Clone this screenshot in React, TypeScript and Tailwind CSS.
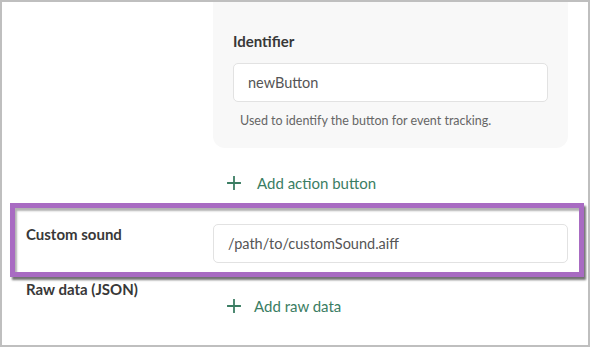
function PlusIcon() {
  return (
    <svg width="14" height="14" viewBox="0 0 14 14" fill="none" className="shrink-0">
      <path d="M7 0.5V13.5M0.5 7H13.5" stroke="#3b7d63" strokeWidth="1.8" strokeLinecap="round" />
    </svg>
  );
}

function AddLink({ label, gap }: { label: string; gap: string }) {
  return (
    <button className={`flex h-5 items-center ${gap} text-[15px] leading-5 text-[#3b7d63]`}>
      <PlusIcon />
      <span>{label}</span>
    </button>
  );
}

export default function App() {
  return (
    <div className="font-['Lato',sans-serif]">
      <div className="h-[347px] w-[590px] overflow-hidden border-2 border-[#bfbfbf] bg-white">
        {/* action button card */}
        <div className="pl-[211px]">
          <div className="w-[355px] rounded-b-[12px] bg-[#f8f8f8] px-5 pt-[29px] pb-[19px]">
            <div className="text-[15px] font-bold leading-5 text-[#383838]">Identifier</div>
            <div className="mt-3 flex h-[39px] items-center rounded-[5px] border border-[#e2e2e2] bg-white px-[14px] text-[14.5px] text-[#555]">
              newButton
            </div>
            <p className="mt-[11px] pl-[7px] text-[12.5px] leading-4 text-[#666]">
              Used to identify the button for event tracking.
            </p>
          </div>
        </div>

        <div className="mt-[25px] pl-[225px]">
          <AddLink label="Add action button" gap="gap-4" />
        </div>

        {/* highlighted row */}
        <div className="ml-2 mt-[10px] w-[574px] border-[5px] border-[#a86bc2] shadow-[2px_3px_2px_rgba(0,0,0,0.55),inset_2px_3px_2px_rgba(0,0,0,0.3)]">
          <div className="flex items-start pt-4 pb-[9px] pl-[11px]">
            <div className="w-[187px] text-[15px] font-bold leading-5 text-[#383838]">Custom sound</div>
            <div className="flex h-[39px] w-[355px] items-center rounded-[5px] border border-[#e2e2e2] bg-white px-[14px] text-[14.5px] text-[#555]">
              /path/to/customSound.aiff
            </div>
          </div>
        </div>

        <div className="mt-[2px] flex items-start pl-6">
          <div className="w-[201px] text-[15px] font-bold leading-5 text-[#383838]">Raw data (JSON)</div>
          <div className="mt-[17px]">
            <AddLink label="Add raw data" gap="gap-[13px]" />
          </div>
        </div>
      </div>
    </div>
  );
}
